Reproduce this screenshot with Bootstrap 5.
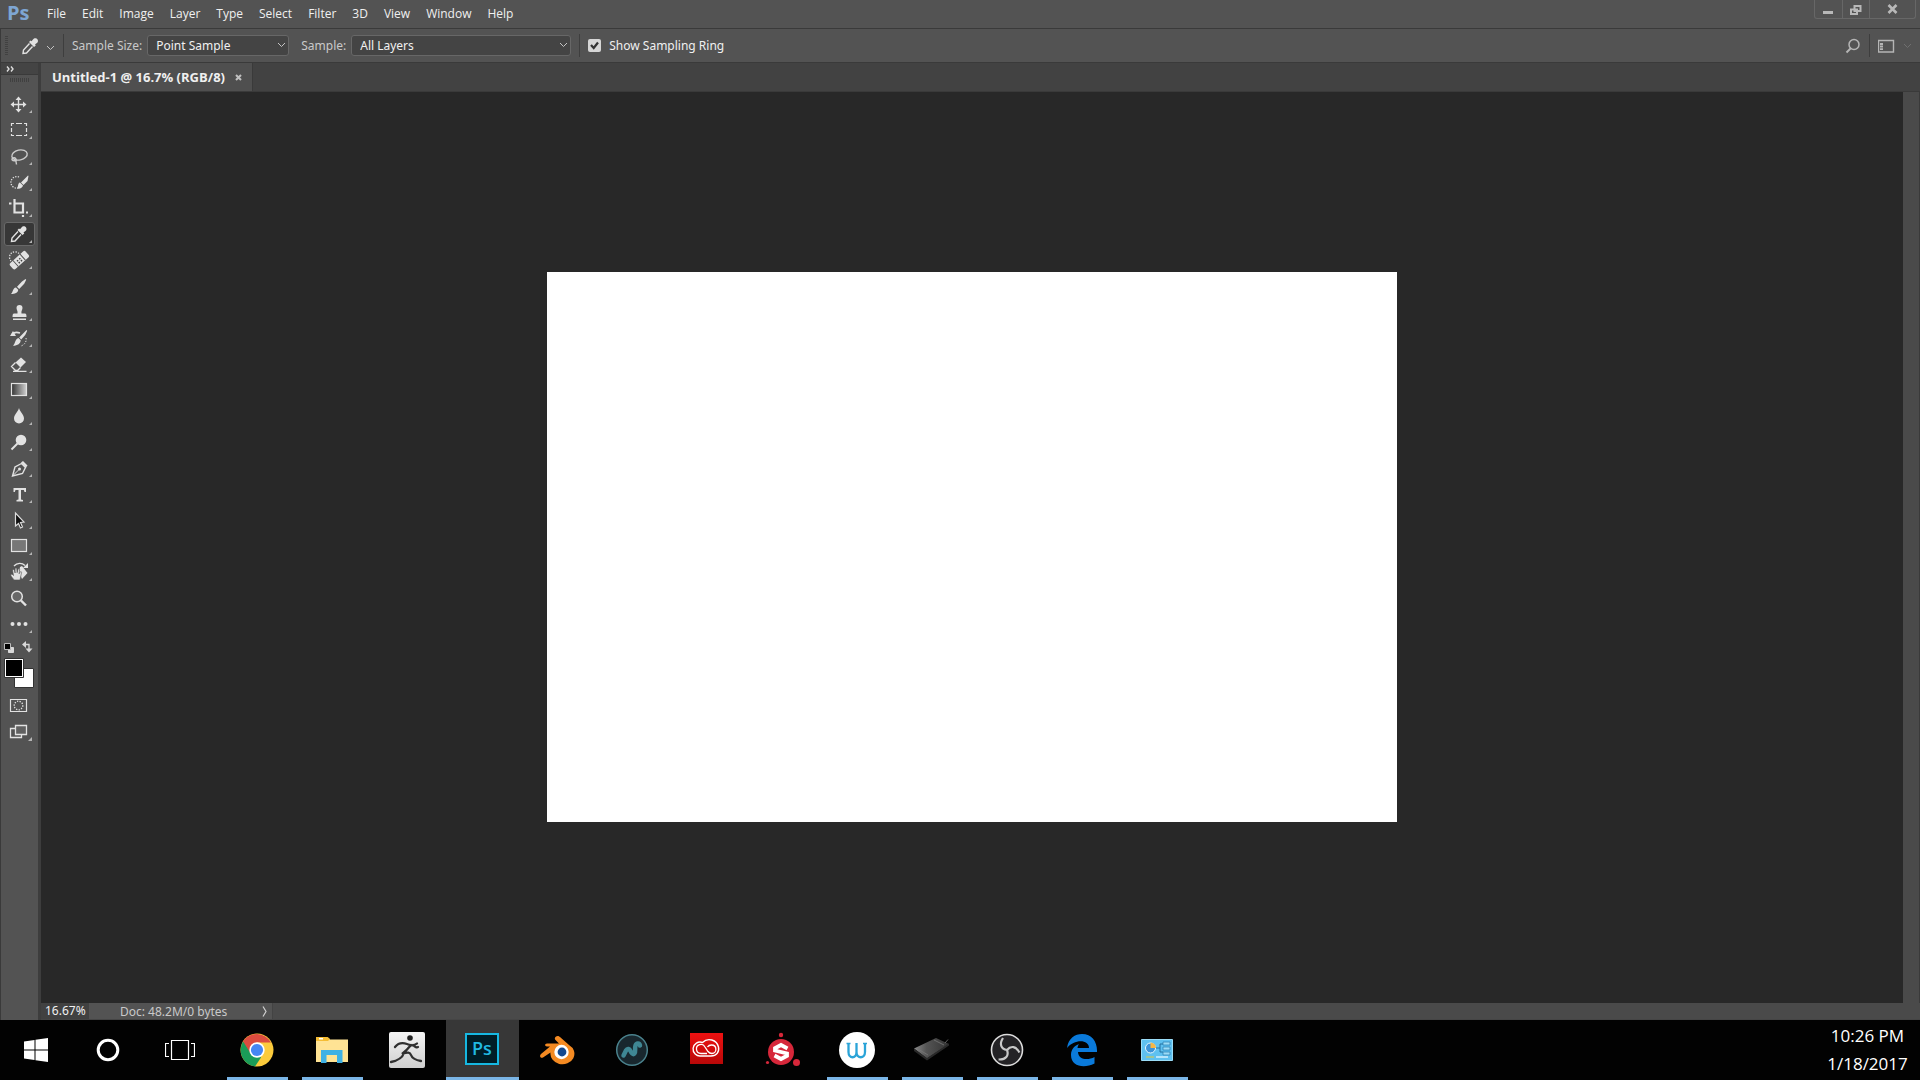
<!DOCTYPE html>
<html lang="en">
<head>
<meta charset="utf-8">
<meta name="viewport" content="width=device-width, initial-scale=1">
<title>Untitled-1 @ 16.7% (RGB/8)</title>
<link rel="stylesheet" href="https://cdn.jsdelivr.net/npm/bootstrap@5.3.0/dist/css/bootstrap.min.css">
<style>
:root{--panel:#535353;--edge:#3a3a3a;--strip:#424242;--ink:#f0f0f0;--dim:#c9c9c9}
body{background:#000;color:var(--ink);font-family:"Noto Sans","Open Sans",sans-serif;font-size:12px;line-height:16px}
button,a.menu-link{color:inherit;text-decoration:none}
.plain{background:none;border:0;padding:0;color:inherit}
svg{display:block;flex:none}
.menu-bar{height:29px;background:var(--panel);border-bottom:1px solid var(--edge);font-family:"Open Sans",sans-serif}
.menu-items{padding-top:6px}
.app-logo{width:39px;padding-left:7px;font:bold 20px/26px "Open Sans",sans-serif;color:#7ea6d3}
.menu-link{padding:0 8px}
.win-buttons{border:1px solid #676767;border-top:0;border-radius:0 0 3px 3px;height:19px;margin-right:4px}
.win-buttons button{width:27px;height:18px}
.win-buttons button+button{border-left:1px solid #676767}
.win-buttons button:last-child{width:46px}
.option-bar{height:34px;background:var(--panel);border-bottom:1px solid var(--edge);border-left:1px solid var(--edge);padding-left:4px}
.grip{width:3px;height:20px;background:repeating-linear-gradient(#414141 0 1px,transparent 1px 2px)}
.divider{width:1px;height:23px;background:#3e3e3e}
.option-bar label{color:var(--dim)}
.option-bar label.bright{color:var(--ink)}
.preset{margin-left:10px}
.picker{appearance:none;height:21px;background:#444;border:1px solid #676767;border-radius:3px;color:var(--ink);padding:0 8px;width:100%;line-height:16px}
.picker-box{position:relative}
.picker-box svg{position:absolute;right:3px;top:7px;pointer-events:none}
.pick-size{width:142px;margin-left:5px}.pick-layer{width:220px;margin-left:5px}
.tick{appearance:none;width:13px;height:13px;border-radius:2px;margin:0;background:#d6d6d6 url("data:image/svg+xml,%3Csvg xmlns='http://www.w3.org/2000/svg' viewBox='0 0 13 13'%3E%3Cpath d='M3 6l2.7 3L10 3.5' fill='none' stroke='%23333' stroke-width='2.2'/%3E%3C/svg%3E")}
.tick:not(:checked){background-image:none}
.tool-side{width:41px;background:var(--panel);border-left:1px solid var(--edge);border-right:3px solid #3d3d3d}
.side-head{height:12px;background:#444;border-bottom:1px solid var(--edge);padding:3px 5px}
.side-grip{width:20px;height:4px;background:repeating-linear-gradient(90deg,#404040 0 1px,transparent 1px 2px);margin:3px 0 10px 9px}
.tools{gap:2px;padding-left:3px}
.tool{width:31px;height:24px;border-radius:3px}
.tool.chosen{background:#373737;box-shadow:inset 0 0 0 1px #686868}
.tab-strip{height:29px;background:var(--strip);border-bottom:1px solid var(--edge)}
.doc-tab{background:#4f4f4f;border-right:1px solid var(--edge);padding:0 10px 0 11px;gap:10px;height:28px;font-family:"Open Sans",sans-serif;font-size:13px;font-weight:700}
.stage{background:#282828}
.artboard{width:850px;height:550px;margin-bottom:1px;background:#fff}
.v-scroll{width:17px;background:#4a4a4a;border-right:1px solid var(--edge)}
.status-bar{height:17px;background:#4a4a4a;border-bottom:1px solid #454545}
.zoom-box{width:48px;background:#414141;border:0;color:var(--ink);padding:0 0 0 4px;font-size:12px;line-height:16px;height:16px}
.doc-info{width:184px;background:var(--panel);color:var(--dim);padding:1px 5px 0 31px;border-right:1px solid #434343}
.task-bar{height:60px;background:#020202}
.sys-btn{width:72px;height:60px}
.task-apps{gap:2px;margin-left:5px}
.task-btn{width:73px;height:60px;border-bottom:3px solid transparent;padding:3px 1px 0 0}
.task-btn.running{background:linear-gradient(#7ab5e6,#7ab5e6) bottom/61px 3px no-repeat border-box}
.task-btn.current{background:#373737;border-bottom-color:#7ab5e6}
.clock{font:17px/28px "Open Sans",sans-serif;width:105px;color:#fff}
</style>
<script src="https://cdn.jsdelivr.net/npm/bootstrap@5.3.0/dist/js/bootstrap.bundle.min.js"></script>
</head>
<body class="vh-100 d-flex flex-column overflow-hidden">
<svg width="0" height="0" class="position-absolute" aria-hidden="true">
<defs>
<path id="more" d="M28 19v3h-3z" fill="#b5b5b5"/>
<linearGradient id="fade"><stop stop-color="#333"/><stop offset="1" stop-color="#d0d0d0"/></linearGradient>
<linearGradient id="silver" x2="0" y2="1"><stop stop-color="#f5f5f5"/><stop offset="1" stop-color="#cfcfcf"/></linearGradient>
<linearGradient id="red" x2="0" y2="1"><stop stop-color="#ee1111"/><stop offset="1" stop-color="#b80808"/></linearGradient>
<linearGradient id="slate"><stop stop-color="#8a8a8a"/><stop offset=".35" stop-color="#555"/><stop offset="1" stop-color="#333"/></linearGradient>
</defs>
</svg>

<nav class="menu-bar d-flex align-items-start flex-shrink-0" aria-label="Menu">
  <div class="app-logo">Ps</div>
  <div class="menu-items d-flex">
    <a class="menu-link" href="#">File</a><a class="menu-link" href="#">Edit</a><a class="menu-link" href="#">Image</a><a class="menu-link" href="#">Layer</a><a class="menu-link" href="#">Type</a><a class="menu-link" href="#">Select</a><a class="menu-link" href="#">Filter</a><a class="menu-link" href="#">3D</a><a class="menu-link" href="#">View</a><a class="menu-link" href="#">Window</a><a class="menu-link" href="#">Help</a>
  </div>
  <div class="win-buttons d-flex ms-auto">
    <button class="plain" aria-label="Minimize"><svg width="26" height="18"><path d="M8 11h10v3H8z" fill="#b8b8b8"/></svg></button>
    <button class="plain" aria-label="Restore"><svg width="26" height="18"><path d="M11.500 6h6v5h-6zM8 9.500h6v4.500H8z" fill="none" stroke="#b8b8b8" stroke-width="2"/></svg></button>
    <button class="plain" aria-label="Close"><svg width="45" height="18"><path d="M18.500 5l8 8m0-8l-8 8" stroke="#b8b8b8" stroke-width="2.600"/></svg></button>
  </div>
</nav>

<div class="option-bar d-flex align-items-center flex-shrink-0">
  <div class="grip"></div>
  <button class="preset plain d-flex align-items-center" aria-label="Eyedropper presets">
    <svg width="24" height="20" viewBox="0 0 24 20"><g transform="translate(-2 -3)"><path d="M17 6.500c2-3 6.500 0 4.500 3l-2.500 2 .8 1-1.800 1.500-5-5 1.500-1.500 1 .7z" fill="#e2e2e2"/><path d="M13.500 10.500l-6 6.500-.5 3.500 3.500-.5 6-6.500" fill="none" stroke="#e2e2e2" stroke-width="1.400"/></g></svg>
    <svg width="9" height="6" class="ms-1 mt-1"><path d="M1 1l3.500 3.500L8 1" fill="none" stroke="#c4c4c4"/></svg>
  </button>
  <div class="divider ms-2"></div>
  <label for="size" class="ms-2">Sample Size:</label>
  <div class="picker-box pick-size"><select id="size" class="picker"><option>Point Sample</option></select><svg width="9" height="6"><path d="M1 1l3.500 3.500L8 1" fill="none" stroke="#c4c4c4"/></svg></div>
  <label for="layers" class="ms-2 ps-1">Sample:</label>
  <div class="picker-box pick-layer"><select id="layers" class="picker"><option>All Layers</option></select><svg width="9" height="6"><path d="M1 1l3.500 3.500L8 1" fill="none" stroke="#c4c4c4"/></svg></div>
  <div class="divider mx-2"></div>
  <input type="checkbox" class="tick" id="ring" checked>
  <label for="ring" class="bright ms-2">Show Sampling Ring</label>
  <div class="ms-auto d-flex align-items-center">
    <button class="plain" aria-label="Search"><svg width="16" height="16"><path d="M6 10l-4.500 4.500" stroke="#b5b5b5" stroke-width="2"/><circle cx="9" cy="6.500" r="5" fill="none" stroke="#b5b5b5" stroke-width="1.500"/></svg></button>
    <div class="divider mx-2"></div>
    <button class="plain d-flex align-items-center" aria-label="Workspace"><svg width="17" height="14"><path d="M.5 1.500h15v11.500H.5zM0 1.500h16" fill="none" stroke="#b5b5b5" stroke-width="1.400"/><path d="M3.500 4v7" stroke="#b5b5b5" stroke-width="3" stroke-dasharray="2 .6"/></svg><svg width="9" height="6" class="ms-2 me-2"><path d="M1 1l3.500 3.500L8 1" fill="none" stroke="#707070"/></svg></button>
  </div>
</div>

<div class="d-flex flex-grow-1 overflow-hidden">
  <aside class="tool-side flex-shrink-0">
    <div class="side-head"><svg width="9" height="6"><path d="M1 .5L3 3 1 5.500M5 .5L7 3 5 5.500" fill="none" stroke="#ddd" stroke-width="1.400"/></svg></div>
    <div class="side-grip"></div>
    <div class="tools d-flex flex-column" role="toolbar" aria-label="Tools">
      <button class="plain tool" aria-label="Move"><svg width="31" height="24" viewBox="0 1 31 24"><path d="M14.500 8v11M9 13.500h11" stroke="#e2e2e2" stroke-width="1.400"/><path d="M14.500 5.500l3 3.500h-6zM14.500 21.500l3-3.500h-6zM6.500 13.500l3.500-3v6zM22.500 13.500l-3.500-3v6z" fill="#e2e2e2"/><use href="#more"/></svg></button>
      <button class="plain tool" aria-label="Rectangular marquee"><svg width="31" height="24" viewBox="0 1 31 24"><path d="M7.500 9V6.500H10m2 0h6m2 0h2.500V9m0 2v4m0 2v1.500H20m-2 0h-6m-2 0H7.500V17m0-2v-4" fill="none" stroke="#e2e2e2" stroke-width="1.200"/><use href="#more"/></svg></button>
      <button class="plain tool" aria-label="Lasso"><svg width="31" height="24" viewBox="0 1 31 24"><g fill="none" stroke="#ccc" stroke-width="1.400"><ellipse cx="15.500" cy="12" rx="7.800" ry="5" transform="rotate(-12 15.500 12)"/><path d="M12 17.500c-4 1-5-1.500-3-2.500s4 1 3 3.500l.5 3"/></g><use href="#more"/></svg></button>
      <button class="plain tool" aria-label="Quick selection"><svg width="31" height="24" viewBox="0 1 31 24"><path d="M15 8a5.800 5.800 0 1 0-1 11" fill="none" stroke="#e2e2e2" stroke-width="1.300" stroke-dasharray="1.300 1.300"/><path d="M24 6.500l.5.500-1 5-4 4-2.500-2.500zM16 13.500l3 3c-.5 2.500-3 3.500-6 3 1.500-1.500.5-5.500 3-6z" fill="#e2e2e2"/><use href="#more"/></svg></button>
      <button class="plain tool" aria-label="Crop"><svg width="31" height="24" viewBox="0 1 31 24"><path d="M5 8.500h2.500m2 0H19V18M10.500 4v13.500H20M22 17.500h2M19 20v2" fill="none" stroke="#e2e2e2" stroke-width="2.200"/><use href="#more"/></svg></button>
      <button class="plain tool chosen" aria-label="Eyedropper"><svg width="31" height="24" viewBox="0 1 31 24"><path d="M17.500 6.500c2-3 6.500 0 4.500 3l-2.500 2 .8 1-1.800 1.500-5-5 1.500-1.500 1 .7z" fill="#e2e2e2"/><path d="M14 10.500l-6 6.500-.5 3.500 3.500-.5 6-6.500" fill="none" stroke="#e2e2e2" stroke-width="1.400"/><use href="#more"/></svg></button>
      <button class="plain tool" aria-label="Spot healing brush"><svg width="31" height="24" viewBox="0 1 31 24"><path d="M15 6.500A5 5 0 1 0 7 14" fill="none" stroke="#e2e2e2" stroke-width="1.300" stroke-dasharray="1.300 1.300"/><g transform="rotate(-42 15 13.500)"><rect x="5" y="9.500" width="21" height="8" rx="2" fill="#e2e2e2"/><path d="M10.500 9.500v8M20 9.500v8" stroke="#535353"/><path d="M13 12h1.500v1.500H13zM16 12h1.500v1.500H16zM13 14.500h1.500V16H13zM16 14.500h1.500V16H16z" fill="#444"/></g><use href="#more"/></svg></button>
      <button class="plain tool" aria-label="Brush"><svg width="31" height="24" viewBox="0 1 31 24"><path d="M21.500 6l.7.700-2 4-5 5.300-2.200-2.200 5-5.300zM12 14.500l2.200 2.200c0 3-3.500 4.300-7.200 4.300 2-1.500 1.500-6 5-6.500z" fill="#e2e2e2"/><use href="#more"/></svg></button>
      <button class="plain tool" aria-label="Clone stamp"><svg width="31" height="24" viewBox="0 1 31 24"><path d="M12.500 9a3 3 0 0 1 6 0c0 2-1.500 3-1 5.500H21c1 0 1.500 1 1.500 3.500h-14c0-2.500.5-3.500 1.500-3.500h3.500c.5-2.500-1-3.500-1-5.500zM9 19.500h13V21H9z" fill="#e2e2e2"/><use href="#more"/></svg></button>
      <button class="plain tool" aria-label="History brush"><svg width="31" height="24" viewBox="0 1 31 24"><path d="M22.500 5l.7.700-2 4.300-4 4.500-2-2zM14.500 13l2.200 2.200c0 3-3 5.500-7.700 5.500 2.500-2 2-7 5.500-7.700z" fill="#e2e2e2"/><path d="M8 9.500c2-2.500 5-2.500 8-1.500" fill="none" stroke="#e2e2e2" stroke-width="1.500"/><path d="M6 11l3-5 3 5z" fill="#e2e2e2"/><path d="M22 13c1 4-2 7-5 8" fill="none" stroke="#e2e2e2" stroke-dasharray="1.300 1.500"/><use href="#more"/></svg></button>
      <button class="plain tool" aria-label="Eraser"><svg width="31" height="24" viewBox="0 1 31 24"><path d="M17 6.500L22 11l-5.500 5.500-5-5z" fill="#e2e2e2"/><path d="M11.500 11.500L7.500 15.500l4 4h2l3-3M9 20.300h13.500" fill="none" stroke="#e2e2e2" stroke-width="1.300"/><use href="#more"/></svg></button>
      <button class="plain tool" aria-label="Gradient"><svg width="31" height="24" viewBox="0 1 31 24"><rect x="7.500" y="6.500" width="15" height="12" fill="url(#fade)" stroke="#e2e2e2" stroke-width="1.200"/><use href="#more"/></svg></button>
      <button class="plain tool" aria-label="Blur"><svg width="31" height="24" viewBox="0 1 31 24"><path d="M15 5c1 4 5 6.500 5 10.500a5 5 0 0 1-10 0c0-4 4-6.500 5-10.500z" fill="#e2e2e2"/><use href="#more"/></svg></button>
      <button class="plain tool" aria-label="Dodge"><svg width="31" height="24" viewBox="0 1 31 24"><circle cx="17" cy="11" r="5.300" fill="#e2e2e2"/><path d="M13.500 14.500L7.500 20.500" stroke="#e2e2e2" stroke-width="2"/><use href="#more"/></svg></button>
      <button class="plain tool" aria-label="Pen"><svg width="31" height="24" viewBox="0 1 31 24"><path d="M17.500 8.500l4 4-3 6-10 2.500L11 12z" fill="none" stroke="#e2e2e2" stroke-width="1.400"/><path d="M17 7.500l2-1.500 4.500 4.500-1.500 2z" fill="#e2e2e2"/><path d="M8.500 21l6-6" stroke="#e2e2e2"/><circle cx="15.500" cy="14" r="1.500" fill="#e2e2e2"/><use href="#more"/></svg></button>
      <button class="plain tool" aria-label="Type"><svg width="31" height="24" viewBox="0 1 31 24"><path d="M9.500 7h12.500v4h-1.500l-.7-2H17v9.500l2 .5v1.500h-6.500V19l2-.5V9h-3l-.7 2H9.500z" fill="#e2e2e2"/><use href="#more"/></svg></button>
      <button class="plain tool" aria-label="Path selection"><svg width="31" height="24" viewBox="0 1 31 24"><path d="M11.500 6v13l3-2.500 2 4.500 2-1-2-4.500 3.500-.5z" fill="#111" stroke="#ddd" stroke-width="1.200"/><use href="#more"/></svg></button>
      <button class="plain tool" aria-label="Rectangle"><svg width="31" height="24" viewBox="0 1 31 24"><rect x="7.500" y="6.500" width="15" height="12" fill="#777" stroke="#e2e2e2" stroke-width="1.200"/><use href="#more"/></svg></button>
      <button class="plain tool" aria-label="Rotate view"><svg width="31" height="24" viewBox="0 1 31 24"><path d="M16 8l2-1 5.500 7-5.500 6-3-7z" fill="#e2e2e2"/><path d="M10 7c3-3.500 8-3.500 11-.5" fill="none" stroke="#e2e2e2" stroke-width="1.300"/><path d="M24 4v5h-5z" fill="#e2e2e2"/><path d="M10 21c-1-2-4-4.500-3-5.500s2 .5 2.500 1L8.500 11c.8-1 1.500-.5 1.800 0l.8 3V9.500c.8-1 1.600-.5 1.700.2l.3 4 1-3.700c1-.8 1.700 0 1.500.8l-.5 4 1.200-2c1-.5 1.500.2 1.200 1L16 21z" fill="#e2e2e2" stroke="#535353" stroke-width=".6"/><use href="#more"/></svg></button>
      <button class="plain tool" aria-label="Zoom"><svg width="31" height="24" viewBox="0 1 31 24"><circle cx="13" cy="11.500" r="5.300" fill="#686868" stroke="#e2e2e2" stroke-width="1.500"/><path d="M17 15.500l5 5" stroke="#e2e2e2" stroke-width="2.400"/></svg></button>
      <button class="plain tool" aria-label="Edit toolbar"><svg width="31" height="24" viewBox="0 1 31 24"><g fill="#e2e2e2"><circle cx="8.500" cy="13" r="2"/><circle cx="15" cy="13" r="2"/><circle cx="21.500" cy="13" r="2"/></g><use href="#more"/></svg></button>
    </div>
    <button class="plain d-block" aria-label="Foreground and background colors"><svg width="37" height="56" viewBox="1 636 37 56"><path d="M8.500 647.500h5v5h-5z" fill="#d8d8d8" stroke="#d8d8d8"/><path d="M4.500 643.500h6v6h-6z" fill="#000" stroke="#bbb"/><path d="M25 644.500h4v6" fill="none" stroke="#d8d8d8" stroke-width="1.300"/><path d="M26 641v7l-4-3.500zM25.500 648.500h7l-3.500 4z" fill="#d8d8d8"/><path d="M14.500 668.500h19v19h-19z" fill="#fff" stroke="#333"/><path d="M4.500 658.500h19v19h-19z" fill="#fff" stroke="#333"/><path d="M6 660h16v16H6z"/></svg></button>
    <button class="plain d-block" aria-label="Quick mask"><svg width="37" height="26" viewBox="1 692 37 26"><path d="M10.500 699.500h16v12h-16z" fill="none" stroke="#e2e2e2" stroke-width="1.200"/><circle cx="18.500" cy="705.500" r="4.300" fill="none" stroke="#e2e2e2" stroke-width="1.300" stroke-dasharray="1.300 1.300"/></svg></button>
    <button class="plain d-block" aria-label="Screen mode"><svg width="37" height="26" viewBox="1 718 37 26"><path d="M10.500 728.500h11v9h-11z" fill="none" stroke="#e2e2e2" stroke-width="1.300"/><path d="M15.500 725.500h11v9h-11z" fill="#606060" stroke="#e2e2e2" stroke-width="1.300"/><path d="M32 737v4h-4z" fill="#b5b5b5"/></svg></button>
  </aside>

  <main class="d-flex flex-column flex-grow-1">
    <div class="tab-strip d-flex flex-shrink-0">
      <div class="doc-tab d-flex align-items-center"><span>Untitled-1 @ 16.7% (RGB/8)</span>
        <button class="plain" aria-label="Close document"><svg width="7" height="7"><path d="M1 1l5 5m0-5L1 6" stroke="#c0c0c0" stroke-width="2"/></svg></button></div>
    </div>
    <div class="d-flex flex-grow-1 overflow-hidden">
      <div class="stage d-flex flex-grow-1 align-items-center justify-content-center"><div class="artboard"></div></div>
      <div class="v-scroll"></div>
    </div>
    <div class="status-bar d-flex flex-shrink-0">
      <input class="zoom-box" value="16.67%" aria-label="Zoom level">
      <div class="doc-info d-flex justify-content-between align-items-center"><span>Doc: 48.2M/0 bytes</span>
        <button class="plain" aria-label="Status options"><svg width="5" height="11"><path d="M1 .5l3 5-3 5" fill="none" stroke="#d0d0d0" stroke-width="1.200"/></svg></button></div>
    </div>
  </main>
</div>

<footer class="task-bar d-flex flex-shrink-0">
  <button class="plain sys-btn d-flex align-items-center justify-content-center" aria-label="Start"><svg width="24" height="24"><path d="M0 3.500L10.500 2v9.500H0zM11.500 1.800L24 0v11.500H11.500zM0 12.500h10.500V22L0 20.500zM11.500 12.500H24V24l-12.500-1.800z" fill="#fff"/></svg></button>
  <button class="plain sys-btn d-flex align-items-center justify-content-center" aria-label="Cortana"><svg width="24" height="24"><circle cx="12" cy="12" r="9.800" fill="none" stroke="#fff" stroke-width="3"/></svg></button>
  <button class="plain sys-btn d-flex align-items-center justify-content-center" aria-label="Task view"><svg width="30" height="22"><path d="M6.500 1.500h17v19h-17zM4 4.500H.5v13H4M26 4.500h3.500v13H26" fill="none" stroke="#fff" stroke-width="1.200"/></svg></button>
  <div class="task-apps d-flex">
    <button class="plain task-btn running d-flex align-items-center justify-content-center" aria-label="Chrome"><svg width="36" height="36"><circle cx="18" cy="18" r="16.500" fill="#fccb3c"/><path d="M18 18L4 9.500A16.500 16.500 0 0 0 16 34.400l6-9z" fill="#1a9c58"/><path d="M4 9.300A16.500 16.500 0 0 1 32 10.500H18l-7 10z" fill="#dc4c3f"/><circle cx="18" cy="18" r="7.700" fill="#fff"/><circle cx="18" cy="18" r="6.100" fill="#4587f3"/></svg></button>
    <button class="plain task-btn running d-flex align-items-center justify-content-center" aria-label="File Explorer"><svg width="36" height="36"><path d="M2 5.500h12l2 2h18V30H2z" fill="#ffe394"/><path d="M2 9V5h11.500L16 7l-2 2z" fill="#f5bd35"/><path d="M5 6h4v1.500H5z" fill="#fff"/><path d="M7 31V18h21.500v13H23v-8H12.500v8z" fill="#3fb1e4"/></svg></button>
    <button class="plain task-btn d-flex align-items-center justify-content-center" aria-label="ZBrush"><svg width="36" height="36"><rect width="36" height="36" rx="2" fill="url(#silver)"/><circle cx="21" cy="6" r="2.800" fill="#222"/><path d="M6 15c4-5 9-4 12-3s6 3 10-.5M22 13c-4 5-5 6-9 9 6-2 8-2 9 1s4 5 10 6M15 21c-2 6-8 8-13 9M24 13c2 2 4 3 5 2" fill="none" stroke="#303030" stroke-width="2.300" stroke-linecap="round"/></svg></button>
    <button class="plain task-btn current d-flex align-items-center justify-content-center" aria-label="Photoshop"><svg width="36" height="36"><rect x="2" y="2" width="32" height="30" fill="#001d26" stroke="#16b8e2" stroke-width="2"/><text x="8" y="23" font-family="Open Sans,sans-serif" font-size="18" font-weight="600" fill="#21b9e1">Ps</text></svg></button>
    <button class="plain task-btn d-flex align-items-center justify-content-center" aria-label="Blender"><svg width="36" height="36"><path d="M17 4.500c1.500-1.200 3-.4 4 .5l9 8a12 10.500 0 1 1-18.500 7.500L4 25.500c-2.500 1-4-1.500-2-3.500l9-7.500H8c-2.500 0-2.500-3 0-3h12l-3.500-3.500c-1-1-1-2.500.5-3.500z" fill="#f48a22"/><circle cx="22.500" cy="20" r="7.200" fill="#fff"/><circle cx="23" cy="20" r="4.400" fill="#14498f"/></svg></button>
    <button class="plain task-btn d-flex align-items-center justify-content-center" aria-label="Modeling app"><svg width="36" height="36"><circle cx="18" cy="18" r="15.300" fill="#18272e" stroke="#4a828d" stroke-width="1.500"/><path d="M9.500 23.500l2.500-5c1.500-2.500 3.500-1.500 4.500.5s2.500 4 4 2.500 0-5 1-8 4-2.500 4.500 0" fill="none" stroke="#3f8794" stroke-width="4.500" stroke-linecap="round" stroke-linejoin="round"/></svg></button>
    <button class="plain task-btn d-flex align-items-center justify-content-center" aria-label="Creative Cloud"><svg width="36" height="36"><path d="M1 1h33v31H1z" fill="url(#red)"/><g fill="none" stroke="#fff"><path d="M22 24H12a7 7 0 1 1 1.500-13.500A9.500 9.500 0 0 1 29.500 15c1 5-2 9-7.500 9" stroke-width="1.400"/><path d="M18 21.500h-6a4.500 4.500 0 1 1 4-6.500l3 4.500c1.500 2 3 2 4 2 5 0 5.500-8.500-.5-8.500-1.500 0-3 .5-4 2" stroke-width="1.300"/></g></svg></button>
    <button class="plain task-btn d-flex align-items-center justify-content-center" aria-label="Substance"><svg width="36" height="36"><g fill="#d6273a"><circle cx="17" cy="20" r="13"/><circle cx="17" cy="3" r="2.200"/><circle cx="3.500" cy="30.500" r="1.600"/><circle cx="32.500" cy="30.500" r="3.500"/></g><path d="M23.500 16.500L17 13l-6 3.200v2.300l12 3v2.300L17 27l-6.500-3.500" fill="none" stroke="#fff" stroke-width="3.800"/></svg></button>
    <button class="plain task-btn running d-flex align-items-center justify-content-center" aria-label="Wacom"><svg width="36" height="36"><circle cx="18" cy="18" r="18" fill="#fff"/><path d="M9.500 11v9c0 7 8 7 8 0v-9v9c0 7 8.500 7 8.500 0v-9" fill="none" stroke="#2ba4d8" stroke-width="2.300"/><path d="M7.500 11.500h4M24 11.500h4" stroke="#2ba4d8" stroke-width="1.500"/></svg></button>
    <button class="plain task-btn running d-flex align-items-center justify-content-center" aria-label="Tablet"><svg width="36" height="36"><path d="M0 16.500L22 6l13 6-22 14.500z" fill="url(#slate)"/><path d="M0 16.500v2.500l13 9.500 22-15v-2L13 26z" fill="#292929"/><path d="M4 17l10 6M20 8l10 5M31 11l3-3.500" stroke="#777" stroke-width=".8"/></svg></button>
    <button class="plain task-btn running d-flex align-items-center justify-content-center" aria-label="OBS"><svg width="36" height="36"><circle cx="18" cy="18" r="15.500" fill="#242326" stroke="#ddd" stroke-width="1.600"/><g fill="none" stroke="#c8c8c8" stroke-width="2.200"><path d="M18 18c-6-1-8-6-4-12"/><path d="M18 18c-6-1-8-6-4-12" transform="rotate(120 18 18)"/><path d="M18 18c-6-1-8-6-4-12" transform="rotate(240 18 18)"/></g></svg></button>
    <button class="plain task-btn running d-flex align-items-center justify-content-center" aria-label="Edge"><svg width="36" height="36"><path d="M3 16C4.500 6 11 2 18 2c10 0 15.500 8 15 18H14c.5 8 10 8.500 16.500 5v6.500C20 37 7 34.500 7 23c0-6 4-9.500 8-11-1 1.500-1.500 3-1.500 4H25c0-9-15-9-22 0z" fill="#0a7adb"/></svg></button>
    <button class="plain task-btn running d-flex align-items-center justify-content-center" aria-label="Control Panel"><svg width="36" height="36"><path d="M2.500 7.500h31v21h-31z" fill="#5fc1f0" stroke="#9bdcf7"/><circle cx="11.500" cy="16" r="5" fill="#3d93d8" stroke="#e6f7ff"/><path d="M11.500 16v-5.500a5.500 5.500 0 0 1 5.500 5.500z" fill="#f5b746"/><path d="M17 16h4v-4h3m-3 4v4h3" fill="none" stroke="#25719f"/><path d="M24 10h7v3h-7zM24 15h7v3h-7zM24 20h7v3h-7z" fill="#9bdcf7" stroke="#277bb0" stroke-width=".7"/><path d="M7 25h8" stroke="#b5c67a" stroke-width="1.500"/><path d="M17 25h12" stroke="#d3f0ff" stroke-width="1.500"/></svg></button>
  </div>
  <div class="clock ms-auto text-center align-self-center"><div>10:26 PM</div><div>1/18/2017</div></div>
</footer>
</body>
</html>
